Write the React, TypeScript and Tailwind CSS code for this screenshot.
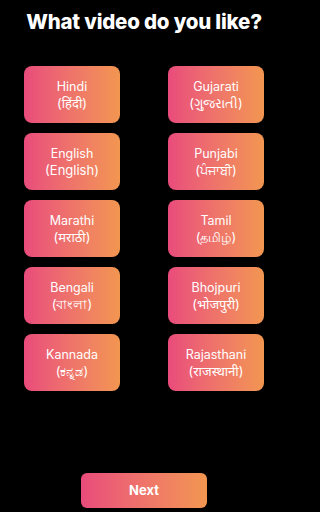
import React from "react";

const languages = [
  { name: "Hindi", native: "(हिंदी)" },
  { name: "Gujarati", native: "(ગુજરાતી)" },
  { name: "English", native: "(English)" },
  { name: "Punjabi", native: "(ਪੰਜਾਬੀ)" },
  { name: "Marathi", native: "(मराठी)" },
  { name: "Tamil", native: "(தமிழ்)" },
  { name: "Bengali", native: "(বাংলা)" },
  { name: "Bhojpuri", native: "(भोजपुरी)" },
  { name: "Kannada", native: "(ಕನ್ನಡ)" },
  { name: "Rajasthani", native: "(राजस्थानी)" },
];

const LanguageCard = ({ name, native }: { name: string; native: string }) => (
  <button
    type="button"
    className="flex h-[57px] w-[96px] flex-col items-center justify-center rounded-[8px] bg-gradient-to-r from-[#e94b7b] to-[#f29650] text-[12.5px] leading-[17px] text-white"
  >
    <span>{name}</span>
    <span className="text-[13px]">{native}</span>
  </button>
);

export default function App() {
  return (
    <div className="min-h-screen w-full bg-black">
      <div
        className="flex h-[512px] w-[288px] flex-col items-center bg-black"
        style={{ fontFamily: 'Inter, "Noto Sans", sans-serif' }}
      >
        <h1 className="mt-[9px] text-[20.5px] font-extrabold leading-[26px] tracking-[-0.2px] text-white">
          What video do you like?
        </h1>
        <div className="mt-[31px] grid grid-cols-[96px_96px] gap-x-[48px] gap-y-[10px]">
          {languages.map((l) => (
            <LanguageCard key={l.name} name={l.name} native={l.native} />
          ))}
        </div>
        <button
          type="button"
          className="mt-auto mb-[4px] h-[35px] w-[126px] rounded-[6px] bg-gradient-to-r from-[#e94b7b] to-[#f29650] text-[13px] font-bold text-white"
        >
          Next
        </button>
      </div>
    </div>
  );
}
